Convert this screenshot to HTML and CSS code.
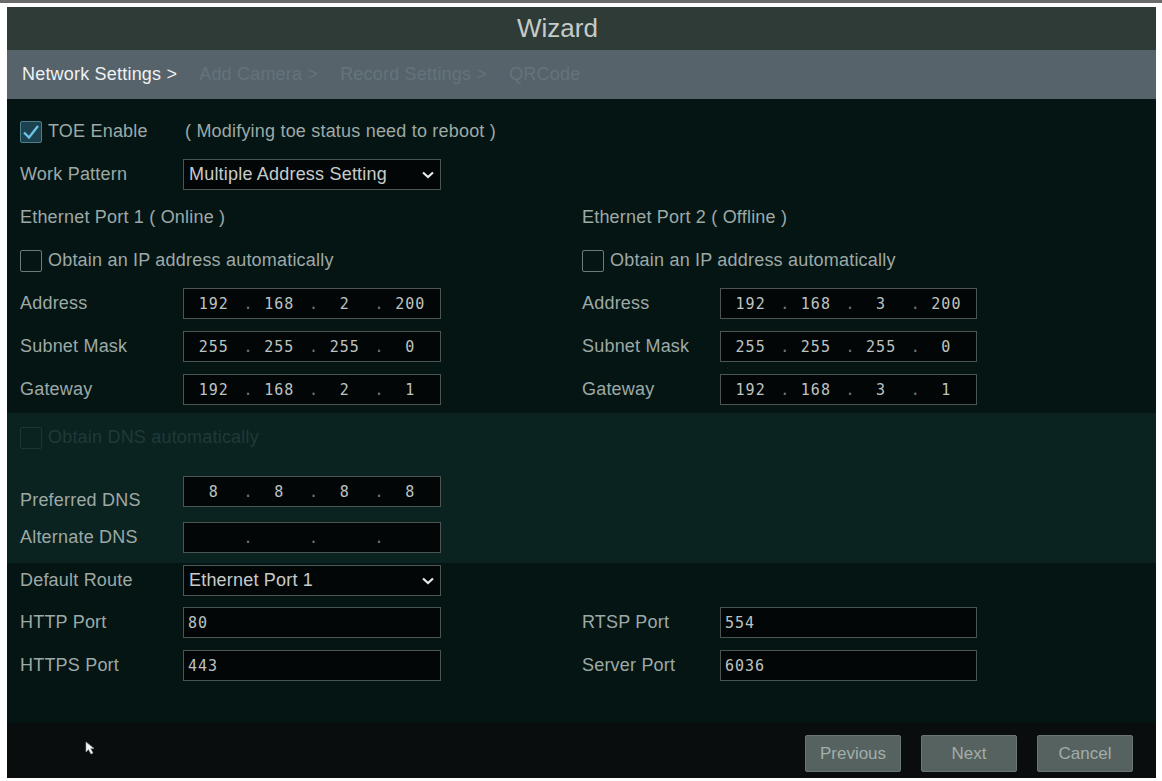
FILE: index.html
```html
<!DOCTYPE html>
<html lang="en">
<head>
    <meta charset="UTF-8">
    <meta name="viewport" content="width=device-width, initial-scale=1.0">
    <title>Wizard</title>
    <link rel="stylesheet" href="styles.css">
</head>
<body>
<div class="window">
    <div class="title">Wizard</div>

    <div class="tabs">
        <span class="tab active">Network Settings &gt;</span>
        <span class="tab">Add Camera &gt;</span>
        <span class="tab">Record Settings &gt;</span>
        <span class="tab">QRCode</span>
    </div>

    <div class="content">
        <div class="row first">
            <label class="check"><span class="box checked"><svg viewBox="0 0 22 22" width="22" height="22"><path d="M4 11.5 L9 16.5 L18 5" fill="none" stroke="#6cc3e6" stroke-width="2.4"/></svg></span>TOE Enable</label>
            <span class="note">( Modifying toe status need to reboot )</span>
        </div>

        <div class="row">
            <span class="label">Work Pattern</span>
            <div class="field select">Multiple Address Setting<svg viewBox="0 0 12 8" width="12" height="8"><path d="M1 1.5 L6 6 L11 1.5" fill="none" stroke="#e6eaea" stroke-width="2.2"/></svg></div>
        </div>

        <div class="row">
            <span class="label wide">Ethernet Port 1 ( Online )</span>
            <span class="label right wide">Ethernet Port 2 ( Offline )</span>
        </div>

        <div class="row">
            <label class="check wide"><span class="box"></span>Obtain an IP address automatically</label>
            <label class="check right wide"><span class="box"></span>Obtain an IP address automatically</label>
        </div>

        <div class="row">
            <span class="label">Address</span>
            <div class="field ip"><b>192</b><i>.</i><b>168</b><i>.</i><b>2</b><i>.</i><b>200</b></div>
            <span class="label right">Address</span>
            <div class="field ip"><b>192</b><i>.</i><b>168</b><i>.</i><b>3</b><i>.</i><b>200</b></div>
        </div>

        <div class="row">
            <span class="label">Subnet Mask</span>
            <div class="field ip"><b>255</b><i>.</i><b>255</b><i>.</i><b>255</b><i>.</i><b>0</b></div>
            <span class="label right">Subnet Mask</span>
            <div class="field ip"><b>255</b><i>.</i><b>255</b><i>.</i><b>255</b><i>.</i><b>0</b></div>
        </div>

        <div class="row">
            <span class="label">Gateway</span>
            <div class="field ip"><b>192</b><i>.</i><b>168</b><i>.</i><b>2</b><i>.</i><b>1</b></div>
            <span class="label right">Gateway</span>
            <div class="field ip"><b>192</b><i>.</i><b>168</b><i>.</i><b>3</b><i>.</i><b>1</b></div>
        </div>

        <div class="band">
            <div class="row first">
                <label class="check wide disabled"><span class="box"></span>Obtain DNS automatically</label>
            </div>
            <div class="row">
                <span class="label low">Preferred DNS</span>
                <div class="field ip"><b>8</b><i>.</i><b>8</b><i>.</i><b>8</b><i>.</i><b>8</b></div>
            </div>
            <div class="row">
                <span class="label">Alternate DNS</span>
                <div class="field ip"><b></b><i>.</i><b></b><i>.</i><b></b><i>.</i><b></b></div>
            </div>
        </div>

        <div class="row route">
            <span class="label">Default Route</span>
            <div class="field select">Ethernet Port 1<svg viewBox="0 0 12 8" width="12" height="8"><path d="M1 1.5 L6 6 L11 1.5" fill="none" stroke="#e6eaea" stroke-width="2.2"/></svg></div>
        </div>

        <div class="row port">
            <span class="label">HTTP Port</span>
            <div class="field num">80</div>
            <span class="label right">RTSP Port</span>
            <div class="field num">554</div>
        </div>

        <div class="row">
            <span class="label">HTTPS Port</span>
            <div class="field num">443</div>
            <span class="label right">Server Port</span>
            <div class="field num">6036</div>
        </div>
    </div>

    <div class="footer">
        <svg class="cursor" viewBox="0 0 12 14" width="12" height="14"><path d="M1 1 L1 11 L3.5 8.5 L6 13 L8 12 L5.6 7.6 L9 7.4 Z" fill="#f2f4f4" stroke="#9aa" stroke-width="0.6"/></svg>
        <div class="buttons">
            <button>Previous</button>
            <button>Next</button>
            <button>Cancel</button>
        </div>
    </div>
</div>
</body>
</html>
```

FILE: styles.css
```css
body {
    margin: 0;
    background: #fff;
    border-top: 3px solid #6a6a6a;
    font-family: "Liberation Sans", Arial, sans-serif;
}
.window {
    margin: 4px 6px 0 7px;
    height: 771px;
    display: flex;
    flex-direction: column;
    background: #041514;
}
.title {
    height: 43px;
    background: #2f3b37;
    color: #c5cbc9;
    font-size: 26px;
    display: flex;
    align-items: center;
    justify-content: center;
    padding-right: 48px;
}
.tabs {
    height: 49px;
    background: #56636a;
    display: flex;
    align-items: center;
    gap: 22px;
    padding-left: 15px;
    font-size: 18px;
    letter-spacing: 0.2px;
    color: #65737a;
}
.tab.active {
    color: #eef2f2;
}
.content {
    flex: 1;
    display: flex;
    flex-direction: column;
    padding: 17px 0 0 13px;
    font-size: 18px;
    letter-spacing: 0.2px;
    color: #9ea9a6;
}
.row {
    display: grid;
    grid-template-columns: 163px 258px 141px 138px 257px;
    align-items: center;
    height: 31px;
    margin-top: 12px;
}
.row.first {
    margin-top: 0;
}
.wide {
    grid-column: span 3;
}
.right {
    grid-column-start: 4;
}
.right.wide {
    grid-column: 4 / span 2;
}
.label {
    white-space: nowrap;
}
.label.low {
    padding-top: 18px;
}
.note {
    grid-column: 2 / span 3;
    padding-left: 2px;
}
.check {
    display: flex;
    align-items: center;
    gap: 6px;
    white-space: nowrap;
}
.box {
    width: 22px;
    height: 22px;
    box-sizing: border-box;
    border: 1px solid #6d7a78;
    border-radius: 2px;
    display: inline-block;
}
.box.checked {
    background: #1c4250;
    border-color: #4c7f8f;
}
.box svg {
    display: block;
    margin: -1px;
}
.check.disabled {
    color: #1f3a38;
}
.check.disabled .box {
    border-color: #1d3533;
}
.field {
    height: 31px;
    box-sizing: border-box;
    border: 1px solid #4b5653;
    background: #030606;
    color: #bcc3c1;
    display: flex;
    align-items: center;
}
.select {
    justify-content: space-between;
    padding: 0 6px 0 5px;
    color: #c6cccb;
}
.ip, .num {
    font-family: "DejaVu Sans Mono", "Liberation Mono", monospace;
    font-size: 15px;
    letter-spacing: 1px;
}
.ip b {
    flex: 1;
    font-weight: normal;
    text-align: center;
}
.ip i {
    font-style: normal;
    width: 6px;
    color: #6f7a78;
}
.num {
    padding-left: 4px;
}
.band {
    margin: 8px 0 0 -13px;
    padding: 9px 0 10px 13px;
    background: #0a2220;
}
.band .row {
    margin-top: 19px;
}
.band .row.first {
    margin-top: 0;
}
.row.route {
    margin-top: 2px;
}
.row.port {
    margin-top: 11px;
}
.footer {
    height: 55px;
    box-sizing: border-box;
    background: #0a0d0d;
    display: flex;
    justify-content: space-between;
    padding: 12px 23px 0 0;
}
.cursor {
    margin: 6px 0 0 78px;
}
.buttons {
    display: flex;
    gap: 20px;
    height: 37px;
}
button {
    width: 96px;
    height: 37px;
    background: #56625f;
    border: 1px solid #6a7673;
    border-radius: 2px;
    color: #a3adab;
    font-family: "Liberation Sans", Arial, sans-serif;
    font-size: 17px;
}
```
